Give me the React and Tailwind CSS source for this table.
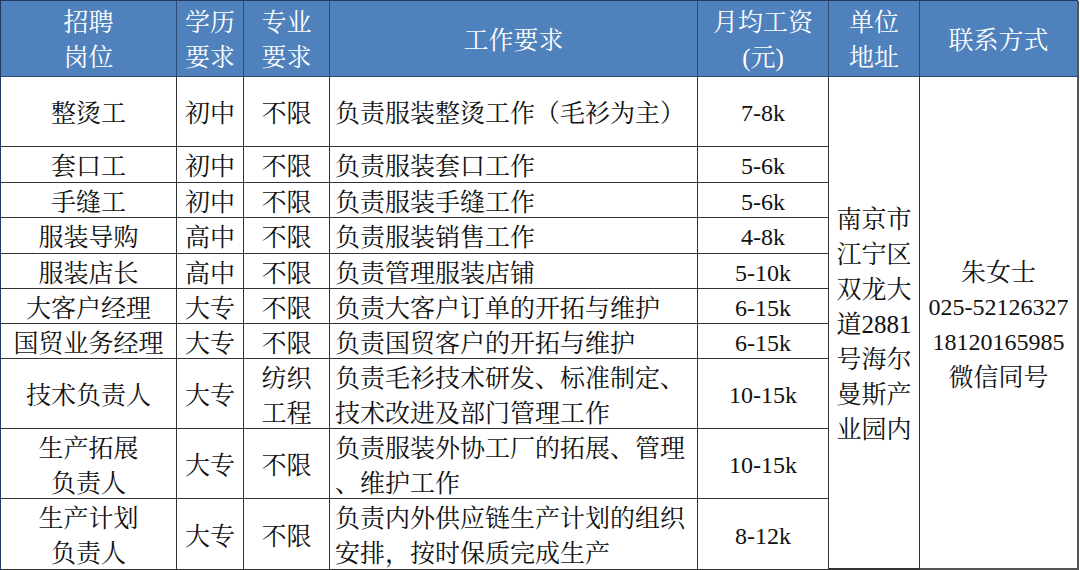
import { Fragment } from "react";

const rows = [
  { name: ["整烫工"], edu: "初中", major: ["不限"], req: ["负责服装整烫工作（毛衫为主）"], pay: "7-8k" },
  { name: ["套口工"], edu: "初中", major: ["不限"], req: ["负责服装套口工作"], pay: "5-6k" },
  { name: ["手缝工"], edu: "初中", major: ["不限"], req: ["负责服装手缝工作"], pay: "5-6k" },
  { name: ["服装导购"], edu: "高中", major: ["不限"], req: ["负责服装销售工作"], pay: "4-8k" },
  { name: ["服装店长"], edu: "高中", major: ["不限"], req: ["负责管理服装店铺"], pay: "5-10k" },
  { name: ["大客户经理"], edu: "大专", major: ["不限"], req: ["负责大客户订单的开拓与维护"], pay: "6-15k" },
  { name: ["国贸业务经理"], edu: "大专", major: ["不限"], req: ["负责国贸客户的开拓与维护"], pay: "6-15k" },
  { name: ["技术负责人"], edu: "大专", major: ["纺织", "工程"], req: ["负责毛衫技术研发、标准制定、", "技术改进及部门管理工作"], pay: "10-15k" },
  { name: ["生产拓展", "负责人"], edu: "大专", major: ["不限"], req: ["负责服装外协工厂的拓展、管理", "、维护工作"], pay: "10-15k" },
  { name: ["生产计划", "负责人"], edu: "大专", major: ["不限"], req: ["负责内外供应链生产计划的组织", "安排，按时保质完成生产"], pay: "8-12k" },
];

const address = ["南京市", "江宁区", "双龙大", "道2881", "号海尔", "曼斯产", "业园内"];

function Lines({ items }) {
  return items.map((t, i) => (
    <div key={i} className="leading-[35px] whitespace-nowrap">{t}</div>
  ));
}

const head = "flex flex-col items-center justify-center pt-[3px] text-center text-white bg-[#4f81bd] border-r border-b border-[#2b4a75]";
const cell = "flex flex-col items-center justify-center pt-[4px] text-center border-r border-b border-[#333]";

export default function App() {
  return (
    <div
      className="w-[1080px] h-[570px] bg-white text-[#111] text-[25px] overflow-hidden"
      style={{ fontFamily: '"Liberation Serif", "Noto Serif CJK SC", "Noto Sans CJK SC", serif' }}
    >
      <div className="grid grid-cols-[176px_67px_86px_368px_131px_91px_159px] grid-rows-[76px_70px_36px_35px_36px_35px_35px_35px_70px_70px_71px] border-t border-l border-[#1f3b63] w-[1078px]">
        <div className={head}><Lines items={["招聘", "岗位"]} /></div>
        <div className={head}><Lines items={["学历", "要求"]} /></div>
        <div className={head}><Lines items={["专业", "要求"]} /></div>
        <div className={head}><Lines items={["工作要求"]} /></div>
        <div className={head}><Lines items={["月均工资", "(元)"]} /></div>
        <div className={head}><Lines items={["单位", "地址"]} /></div>
        <div className={head + " border-r-2 border-r-[#555]"}><Lines items={["联系方式"]} /></div>

        {rows.map((r, i) => (
          <Fragment key={i}>
            <div className={cell}><Lines items={r.name} /></div>
            <div className={cell}><Lines items={[r.edu]} /></div>
            <div className={cell}><Lines items={r.major} /></div>
            <div className="flex flex-col justify-center pt-[4px] pl-[5px] border-r border-b border-[#333]"><Lines items={r.req} /></div>
            <div className={cell + " text-[24px]"}><Lines items={[r.pay]} /></div>
            {i === 0 && (
              <>
                <div className="col-start-6 row-start-2 row-span-10 flex flex-col items-center justify-center pt-[4px] border-r border-b-2 border-[#333]">
                  <Lines items={address} />
                </div>
                <div className="col-start-7 row-start-2 row-span-10 flex flex-col items-center justify-center pt-[4px] border-r-2 border-b-2 border-[#555]">
                  <div className="leading-[35px]">朱女士</div>
                  <div className="leading-[35px] text-[24px]">025-52126327</div>
                  <div className="leading-[35px] text-[24px]">18120165985</div>
                  <div className="leading-[35px]">微信同号</div>
                </div>
              </>
            )}
          </Fragment>
        ))}
      </div>
    </div>
  );
}
